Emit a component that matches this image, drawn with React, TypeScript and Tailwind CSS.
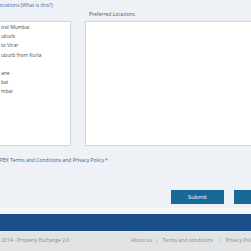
import React from 'react';

const regions = ['tral Mumbai', 'uburb', 'to Virar', 'uburb from Kurla', '', 'ane', 'bai', 'mbai'];

export default function App() {
  return (
    <div className="w-[251px] h-[251px] overflow-hidden bg-[#eef1f5] flex flex-col font-['Open_Sans',sans-serif] text-[5px] text-[#555]">
      <div className="h-[214px] flex flex-col">
        <div className="flex gap-[14px] -ml-[20px]">
          {/* available locations */}
          <div className="w-[91px] flex flex-col shrink-0">
            <div className="h-[21px] pl-[17px] pt-[2px] leading-[7px] text-[#3f6ea3] whitespace-nowrap">
              Locations (What is this?)
            </div>
            <div className="h-[125px] bg-white border border-[#cfd6de] pl-[20px] pt-[1px]">
              {regions.map((r, i) => (
                <div key={i} className="h-[9.2px] leading-[9.2px] whitespace-nowrap text-[#4a4a4a]">
                  {r}
                </div>
              ))}
            </div>
          </div>
          {/* preferred */}
          <div className="w-[190px] flex flex-col shrink-0">
            <div className="h-[21px] flex items-end pb-[3.5px] pl-[4px] leading-[7px] whitespace-nowrap">
              Preferred Locations
            </div>
            <div className="h-[125px] bg-white border border-[#cfd6de]" />
          </div>
        </div>

        <div className="mt-[11px] leading-[7px] whitespace-nowrap">
          PEX <span className="text-[#2f5f98]">Terms and Conditions</span> and{' '}
          <span className="text-[#2f5f98]">Privacy Policy</span>{' '}
          <span className="text-[#d9302c]">*</span>
        </div>

        <div className="mt-[25.5px] flex gap-[10px] pl-[171px]">
          <button className="w-[53px] h-[14px] shrink-0 bg-[#17699a] text-white text-[5.7px] leading-[14px]">
            Submit
          </button>
          <button className="w-[53px] h-[14px] shrink-0 bg-[#17699a] text-white text-[5.7px] leading-[14px]">
            Cancel
          </button>
        </div>
        <div className="mt-auto h-[6px] bg-[#f6f7f9]" />
      </div>

      <div className="h-[17px] bg-[#1b4f8c] shrink-0" />

      <div className="h-[20px] bg-[#e2e3e5] shrink-0 flex items-center text-[#8a8a8a] whitespace-nowrap">
        <span className="w-[135px] shrink-0 -ml-[4px]">© 2014 - Property Exchange 2.0</span>
        <div className="flex items-center shrink-0">
          <span>About us</span>
          <span className="mx-[4px] text-[#a0a0a0]">|</span>
          <span>Terms and conditions</span>
          <span className="mx-[5px] text-[#a0a0a0]">|</span>
          <span>Privacy Policy</span>
        </div>
      </div>
    </div>
  );
}
